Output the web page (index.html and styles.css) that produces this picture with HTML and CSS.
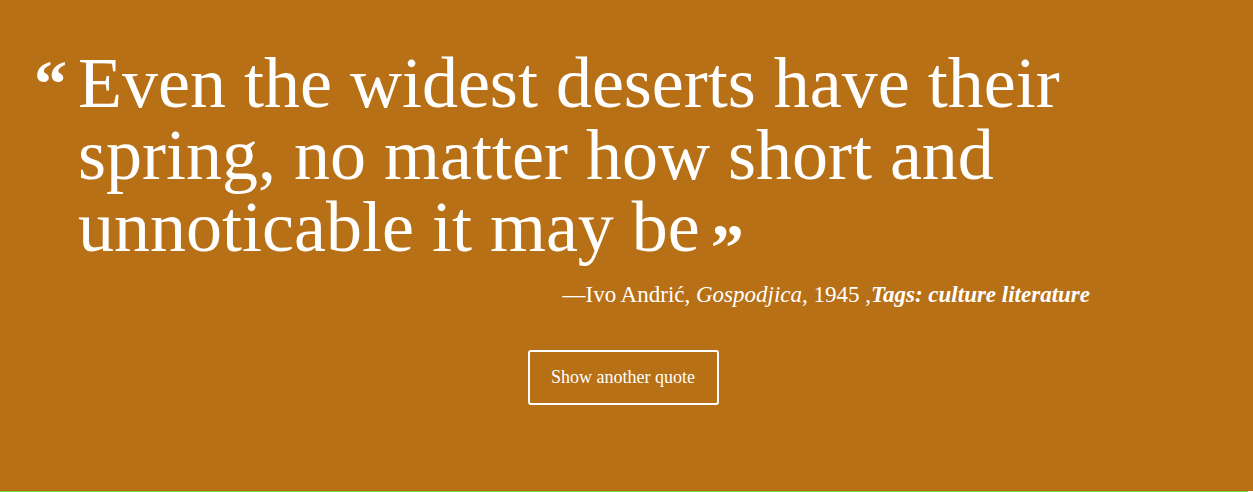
FILE: index.html
```html
<!DOCTYPE html>
<html lang="en">
<head>
<meta charset="utf-8">
<title>Random Quote</title>
<link rel="stylesheet" href="styles.css">
</head>
<body>
<main class="page">
  <section class="quote-box">
    <blockquote class="quote">
      <p class="quote-text">Even the widest deserts have their spring, no matter how short and unnoticable it may be</p>
      <p class="cite">&mdash;Ivo Andrić, <em>Gospodjica</em>, 1945 ,<strong class="tags">Tags: culture literature</strong></p>
    </blockquote>
    <div class="actions">
      <button class="btn" type="button">Show another quote</button>
    </div>
  </section>
</main>
<div class="baseline"></div>
</body>
</html>
```

FILE: styles.css
```css
html, body {
  margin: 0;
  padding: 0;
}
body {
  background: #ffffff;
  font-family: "Liberation Serif", "DejaVu Serif", serif;
  color: #ffffff;
}
.page {
  height: 491px;
  background: #b87016;
  box-sizing: border-box;
  padding-top: 47px;
}
.quote-box {
  width: 1060px;
  margin-left: 34px;
}
.quote {
  margin: 0;
}
.quote-text {
  margin: 0;
  padding-left: 44px;
  font-size: 72px;
  line-height: 72px;
  position: relative;
}
.quote-text::before,
.quote-text::after {
  font-weight: bold;
  font-family: "Liberation Serif", serif;
  font-size: 66px;
}
.quote-text::before {
  content: "\201C";
  position: absolute;
  left: 0;
  top: 4px;
  line-height: 66px;
}
.quote-text::after {
  content: "\201D";
  display: inline-block;
  line-height: 40px;
  height: 40px;
  vertical-align: top;
  position: relative;
  top: 36px;
  margin-left: 11px;
}
.cite {
  margin: 19px 0 0;
  text-align: right;
  padding-right: 4px;
  font-size: 23px;
  line-height: 26px;
}
.cite em {
  font-style: italic;
}
.tags {
  font-style: italic;
  font-weight: bold;
}
.actions {
  display: flex;
  justify-content: center;
  margin-top: 42px;
  padding-left: 118px;
}
.btn {
  background: transparent;
  color: #ffffff;
  border: 2px solid #ffffff;
  border-radius: 3px;
  width: 191px;
  height: 55px;
  font-family: "Liberation Serif", serif;
  font-size: 18px;
  padding: 0;
  cursor: pointer;
}
.baseline {
  height: 1px;
  width: calc(100% - 5px);
  background: #6cdc3c;
}
```
